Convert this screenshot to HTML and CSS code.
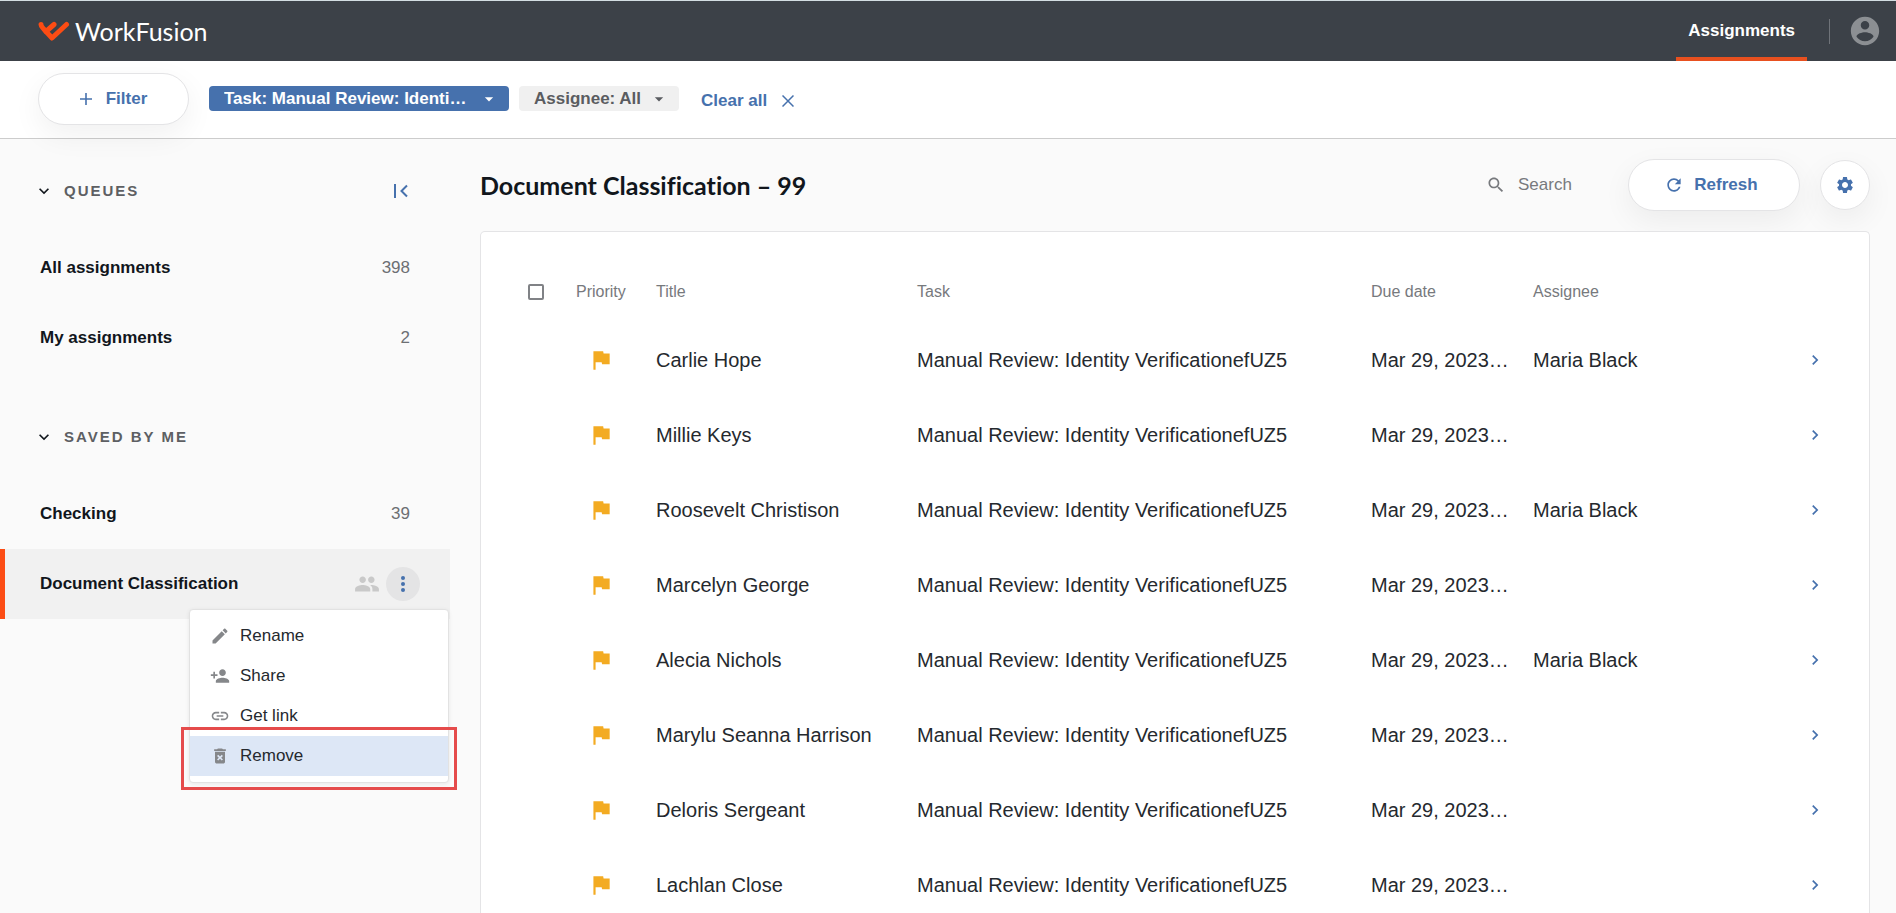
FILE: index.html
```html
<!DOCTYPE html>
<html lang="en">
<head>
    <meta charset="UTF-8">
    <meta name="viewport" content="width=device-width, initial-scale=1.0">
    <title>WorkFusion - Assignments</title>
    <link rel="stylesheet" href="styles.css">
</head>
<body>

<svg class="sprite" aria-hidden="true">
    <symbol id="flag" viewBox="0 0 24 24"><path d="M14.4 6L14 4H5v17h2v-7h5.600l.4 2h7V6z"/></symbol>
    <symbol id="chevron" viewBox="0 0 24 24"><path d="M10 6L8.590 7.410 13.170 12l-4.580 4.590L10 18l6-6z"/></symbol>
    <symbol id="expand" viewBox="0 0 24 24"><path d="M16.590 8.590L12 13.170 7.410 8.590 6 10l6 6 6-6z"/></symbol>
    <symbol id="caret" viewBox="0 0 24 24"><path d="M7 10l5 5 5-5z"/></symbol>
</svg>

<header class="topbar">
    <a class="logo" href="#">
        <svg width="32" height="20" viewBox="0 0 32 20" fill="none" stroke="#fc4c14" stroke-width="5" stroke-linecap="round" stroke-linejoin="round">
            <path d="M3 3.500c0 2 1.500 3 3 4.800L14 17 28.500 3.500"/>
            <path d="M8 10.500L16 3.500"/>
        </svg>
        <span>WorkFusion</span>
    </a>
    <nav class="topnav">
        <a class="active" href="#">Assignments</a>
    </nav>
    <button class="user" aria-label="Account">
        <svg width="34" height="34" viewBox="0 0 24 24"><path d="M12 2C6.480 2 2 6.480 2 12s4.480 10 10 10 10-4.480 10-10S17.520 2 12 2zm0 3c1.660 0 3 1.340 3 3s-1.340 3-3 3-3-1.340-3-3 1.340-3 3-3zm0 14.200c-2.500 0-4.710-1.280-6-3.220.03-1.990 4-3.080 6-3.080 1.990 0 5.970 1.090 6 3.080-1.290 1.940-3.500 3.220-6 3.220z"/></svg>
    </button>
</header>

<div class="filters">
    <button class="pill filter-btn">
        <svg width="12" height="12" viewBox="0 0 12 12" stroke="currentColor" stroke-width="1.600"><path d="M6 0v12M0 6h12"/></svg>
        Filter
    </button>
    <div class="chip chip-task">
        <select aria-label="Task filter"><option>Task: Manual Review: Identi…</option></select>
        <svg width="20" height="20"><use href="#caret"/></svg>
    </div>
    <div class="chip chip-assignee">
        <select aria-label="Assignee filter"><option>Assignee: All</option></select>
        <svg width="20" height="20"><use href="#caret"/></svg>
    </div>
    <button class="clear">
        Clear all
        <svg width="12" height="12" viewBox="0 0 12 12" stroke="currentColor" stroke-width="1.500"><path d="M.5.5l11 11M11.500.5l-11 11"/></svg>
    </button>
</div>

<div class="layout">
    <aside class="sidebar">
        <section>
            <div class="group-head">
                <button class="toggle"><svg width="20" height="20"><use href="#expand"/></svg>QUEUES</button>
                <button class="collapse" aria-label="Collapse sidebar">
                    <svg width="14" height="14" viewBox="0 0 14 14" fill="none" stroke="currentColor" stroke-width="2"><path d="M1 0v14M13 1.500L7.500 7l5.500 5.500"/></svg>
                </button>
            </div>
            <a class="queue" href="#">All assignments <span>398</span></a>
            <a class="queue" href="#">My assignments <span>2</span></a>
        </section>
        <section>
            <div class="group-head">
                <button class="toggle"><svg width="20" height="20"><use href="#expand"/></svg>SAVED BY ME</button>
            </div>
            <a class="queue" href="#">Checking <span>39</span></a>
            <div class="queue selected">
                <a href="#">Document Classification</a>
                <svg class="people" width="26" height="26" viewBox="0 0 24 24"><path d="M16 11c1.660 0 2.990-1.340 2.990-3S17.660 5 16 5c-1.660 0-3 1.340-3 3s1.340 3 3 3zm-8 0c1.660 0 2.990-1.340 2.990-3S9.660 5 8 5C6.340 5 5 6.340 5 8s1.340 3 3 3zm0 2c-2.330 0-7 1.170-7 3.500V19h14v-2.500c0-2.330-4.670-3.500-7-3.500zm8 0c-.29 0-.62.020-.97.050 1.160.84 1.970 1.970 1.970 3.450V19h6v-2.500c0-2.330-4.670-3.500-7-3.500z"/></svg>
                <button class="more" aria-label="More actions">
                    <svg width="24" height="24" viewBox="0 0 24 24"><circle cx="12" cy="6" r="2"/><circle cx="12" cy="12" r="2"/><circle cx="12" cy="18" r="2"/></svg>
                </button>
                <div class="menu" role="menu">
                    <button role="menuitem">
                        <svg width="20" height="20" viewBox="0 0 24 24"><path d="M3 17.250V21h3.750L17.810 9.940l-3.750-3.750L3 17.250zM20.710 7.040c.39-.39.39-1.020 0-1.410l-2.340-2.340c-.39-.39-1.020-.39-1.410 0l-1.830 1.830 3.750 3.750 1.830-1.830z"/></svg>
                        Rename
                    </button>
                    <button role="menuitem">
                        <svg width="20" height="20" viewBox="0 0 24 24"><path d="M15 12c2.210 0 4-1.790 4-4s-1.790-4-4-4-4 1.790-4 4 1.790 4 4 4zm-9-2V7H4v3H1v2h3v3h2v-3h3v-2H6zm9 4c-2.670 0-8 1.340-8 4v2h16v-2c0-2.660-5.330-4-8-4z"/></svg>
                        Share
                    </button>
                    <button role="menuitem">
                        <svg width="20" height="20" viewBox="0 0 24 24"><path d="M3.900 12c0-1.710 1.390-3.100 3.100-3.100h4V7H7c-2.760 0-5 2.240-5 5s2.240 5 5 5h4v-1.900H7c-1.710 0-3.100-1.390-3.100-3.100zM8 13h8v-2H8v2zm9-6h-4v1.900h4c1.710 0 3.100 1.390 3.100 3.100s-1.390 3.100-3.100 3.100h-4V17h4c2.760 0 5-2.240 5-5s-2.240-5-5-5z"/></svg>
                        Get link
                    </button>
                    <button class="remove" role="menuitem">
                        <svg width="20" height="20" viewBox="0 0 24 24"><path d="M6 19c0 1.100.9 2 2 2h8c1.100 0 2-.9 2-2V7H6v12zm2.460-7.120l1.410-1.410L12 12.590l2.120-2.120 1.410 1.410L13.410 14l2.120 2.120-1.410 1.410L12 15.410l-2.120 2.120-1.410-1.410L10.590 14l-2.130-2.120zM15.500 4l-1-1h-5l-1 1H5v2h14V4z"/></svg>
                        Remove
                    </button>
                </div>
            </div>
        </section>
    </aside>

    <main class="content">
        <div class="content-head">
            <h1>Document Classification – 99</h1>
            <label class="search">
                <svg width="20" height="20" viewBox="0 0 24 24"><path d="M15.500 14h-.79l-.28-.27C15.410 12.590 16 11.110 16 9.500 16 5.910 13.090 3 9.500 3S3 5.910 3 9.500 5.910 16 9.500 16c1.610 0 3.090-.59 4.230-1.570l.27.28v.79l5 4.990L20.490 19l-4.990-5zm-6 0C7.010 14 5 11.990 5 9.500S7.010 5 9.500 5 14 7.010 14 9.500 11.990 14 9.500 14z"/></svg>
                <input type="text" placeholder="Search">
            </label>
            <button class="pill refresh">
                <svg width="20" height="20" viewBox="0 0 24 24"><path d="M17.650 6.350C16.200 4.900 14.210 4 12 4c-4.420 0-7.990 3.580-7.990 8s3.570 8 7.990 8c3.730 0 6.840-2.550 7.730-6h-2.080c-.82 2.330-3.040 4-5.650 4-3.310 0-6-2.690-6-6s2.690-6 6-6c1.660 0 3.140.69 4.220 1.780L13 11h7V4l-2.350 2.350z"/></svg>
                Refresh
            </button>
            <button class="pill gear" aria-label="Settings">
                <svg width="20" height="20" viewBox="0 0 24 24"><path d="M19.140 12.940c.04-.3.060-.61.060-.94 0-.32-.02-.64-.07-.94l2.030-1.580c.18-.14.230-.41.120-.61l-1.920-3.320c-.12-.22-.37-.29-.59-.22l-2.390.96c-.5-.38-1.030-.7-1.620-.94l-.36-2.540c-.04-.24-.24-.41-.48-.41h-3.840c-.24 0-.43.170-.47.410l-.36 2.540c-.59.240-1.130.57-1.620.94l-2.390-.96c-.22-.08-.47 0-.59.220L2.740 8.870c-.12.210-.08.470.120.610l2.030 1.580c-.05.3-.09.630-.09.940s.02.640.070.940l-2.030 1.580c-.18.140-.23.410-.12.610l1.920 3.320c.12.220.37.290.59.220l2.390-.96c.5.380 1.030.7 1.620.94l.36 2.540c.05.240.24.410.48.410h3.840c.24 0 .44-.17.47-.41l.36-2.540c.59-.24 1.130-.56 1.620-.94l2.390.96c.22.080.47 0 .59-.22l1.920-3.320c.12-.22.070-.47-.12-.61l-2.010-1.580zM12 15.600c-1.980 0-3.600-1.620-3.600-3.600s1.620-3.600 3.600-3.600 3.600 1.620 3.600 3.600-1.620 3.600-3.600 3.600z"/></svg>
            </button>
        </div>

        <div class="card">
            <table>
                <colgroup>
                    <col class="col-check">
                    <col class="col-priority">
                    <col class="col-title">
                    <col class="col-task">
                    <col class="col-due">
                    <col>
                    <col class="col-open">
                </colgroup>
                <thead>
                    <tr>
                        <th class="check"><input type="checkbox" aria-label="Select all"></th>
                        <th>Priority</th>
                        <th>Title</th>
                        <th>Task</th>
                        <th>Due date</th>
                        <th>Assignee</th>
                        <th></th>
                    </tr>
                </thead>
                <tbody id="rows"></tbody>
            </table>
        </div>
    </main>
</div>

<script>
    const assignments = [
        ['Carlie Hope', 'Maria Black'],
        ['Millie Keys', ''],
        ['Roosevelt Christison', 'Maria Black'],
        ['Marcelyn George', ''],
        ['Alecia Nichols', 'Maria Black'],
        ['Marylu Seanna Harrison', ''],
        ['Deloris Sergeant', ''],
        ['Lachlan Close', '']
    ];

    document.getElementById('rows').innerHTML = assignments.map(([title, assignee]) => `
        <tr>
            <td></td>
            <td class="priority"><svg width="26" height="26"><use href="#flag"/></svg></td>
            <td>${title}</td>
            <td>Manual Review: Identity VerificationefUZ5</td>
            <td>Mar 29, 2023…</td>
            <td>${assignee}</td>
            <td class="open"><a href="#" aria-label="Open ${title}"><svg width="20" height="20"><use href="#chevron"/></svg></a></td>
        </tr>`).join('');
</script>

</body>
</html>
```
FILE: styles.css
```css
* {
    box-sizing: border-box;
    margin: 0;
    padding: 0;
}
body {
    font-family: 'Liberation Sans', Arial, sans-serif;
    font-size: 17px;
    line-height: 20px;
    height: 100vh;
    overflow: hidden;
    display: flex;
    flex-direction: column;
    background-color: #fafafa;
    color: #11161c;
}
a {
    color: inherit;
    text-decoration: none;
}
button, input, select {
    font: inherit;
    color: inherit;
    background: none;
    border: none;
}
button {
    cursor: pointer;
}
svg {
    fill: currentColor;
    flex-shrink: 0;
    display: block;
}
.sprite {
    position: absolute;
    width: 0;
    height: 0;
}

/* top bar */
.topbar {
    display: flex;
    align-items: center;
    height: 61px;
    flex-shrink: 0;
    padding: 0 14px 0 38px;
    background-color: #3c4148;
    border-top: 1px solid #d3dde2;
    color: #fff;
}
.logo {
    display: flex;
    align-items: center;
    gap: 5px;
    font-family: Lato, sans-serif;
    font-size: 25px;
}
.logo svg {
    fill: none;
}
.topnav {
    display: flex;
    align-self: stretch;
    margin-left: auto;
    margin-right: 22px;
}
.topnav a {
    display: flex;
    align-items: center;
    padding: 4px 12px 0;
    border-bottom: 4px solid transparent;
    font-weight: bold;
}
.topnav .active {
    border-bottom-color: #e8501f;
}
.user {
    border-left: 1px solid #6f7379;
    padding-left: 18px;
    height: 25px;
    display: flex;
    align-items: center;
    color: #8c8f93;
}

/* filter bar */
.filters {
    display: flex;
    align-items: center;
    height: 78px;
    flex-shrink: 0;
    padding: 0 38px 2px;
    background-color: #fff;
    border-bottom: 1px solid #ccc;
}
.pill {
    display: flex;
    align-items: center;
    justify-content: center;
    height: 52px;
    border: 1px solid #e4e4e6;
    border-radius: 26px;
    background-color: #fff;
    box-shadow: 0 10px 30px rgba(0, 0, 0, 0.06);
    color: #4671ad;
    font-weight: bold;
}
.filter-btn {
    width: 151px;
    gap: 14px;
    margin-right: 20px;
}
.chip {
    position: relative;
    height: 25px;
    margin-right: 10px;
    border-radius: 4px;
    font-weight: bold;
}
.chip select {
    appearance: none;
    width: 100%;
    height: 25px;
    padding: 0 30px 0 15px;
    cursor: pointer;
}
.chip svg {
    position: absolute;
    right: 10px;
    top: 3px;
    pointer-events: none;
}
.chip-task {
    width: 300px;
    background-color: #4671ad;
    color: #fff;
}
.chip-assignee {
    width: 160px;
    background-color: #f0f0f0;
    color: #5a5c60;
}
.clear {
    display: flex;
    align-items: center;
    gap: 15px;
    margin-left: 12px;
    padding-top: 4px;
    color: #4671ad;
    font-weight: bold;
}

/* sidebar */
.layout {
    flex: 1;
    min-height: 0;
    display: flex;
}
.sidebar {
    width: 450px;
    flex-shrink: 0;
    padding-top: 10px;
}
.sidebar section {
    margin-bottom: 22px;
}
.group-head {
    display: flex;
    align-items: center;
    justify-content: space-between;
    height: 84px;
    padding: 0 42px 0 34px;
}
.toggle {
    display: flex;
    align-items: center;
    gap: 10px;
    font-size: 15px;
    font-weight: bold;
    letter-spacing: 2px;
    color: #5d5f63;
}
.toggle svg {
    color: #11161c;
}
.collapse {
    color: #4671ad;
}
.collapse svg {
    fill: none;
}
.queue {
    position: relative;
    display: flex;
    align-items: center;
    justify-content: space-between;
    height: 70px;
    padding: 0 40px;
    font-weight: bold;
}
.queue span {
    font-weight: normal;
    color: #6c6f73;
}
.selected {
    background-color: #f1f1f1;
    border-left: 5px solid #fc4c14;
    padding: 0 30px 0 35px;
}
.people {
    margin-left: auto;
    margin-right: 6px;
    color: #c9c9c9;
}
.more {
    display: flex;
    align-items: center;
    justify-content: center;
    width: 34px;
    height: 34px;
    border-radius: 50%;
    background-color: #e4e4e5;
    color: #4671ad;
}
.menu {
    position: absolute;
    top: 60px;
    right: 1px;
    width: 260px;
    padding: 6px 0;
    background-color: #fff;
    border: 1px solid #e2e2e2;
    border-radius: 4px;
    box-shadow: 0 1px 4px rgba(0, 0, 0, 0.08);
}
.menu button {
    position: relative;
    display: flex;
    align-items: center;
    gap: 10px;
    width: 100%;
    height: 40px;
    padding: 0 20px;
    font-weight: normal;
    color: #25292e;
}
.menu svg {
    color: #85878a;
}
.menu .remove {
    background-color: #dde7f6;
}
.remove::after {
    content: '';
    position: absolute;
    inset: -9px -9px -14px;
    border: 3px solid #e54b4b;
}

/* content */
.content {
    flex: 1;
    min-width: 0;
    display: flex;
    flex-direction: column;
    padding: 0 26px 0 30px;
}
.content-head {
    display: flex;
    align-items: center;
    height: 92px;
    flex-shrink: 0;
}
h1 {
    font-family: Lato, sans-serif;
    font-size: 25px;
    line-height: 30px;
    font-variant-ligatures: none;
    margin-right: auto;
}
.search {
    display: flex;
    align-items: center;
    gap: 12px;
    color: #77797d;
}
.search input {
    width: 110px;
    outline: none;
}
.search input::placeholder {
    color: #77797d;
    opacity: 1;
}
.refresh {
    width: 172px;
    gap: 10px;
    padding-right: 6px;
    margin-right: 20px;
}
.gear {
    width: 50px;
    height: 50px;
}
.card {
    flex: 1;
    min-height: 0;
    overflow: hidden;
    padding-top: 30px;
    background-color: #fff;
    border: 1px solid #e4e4e6;
    border-bottom: none;
    border-radius: 5px 5px 0 0;
}
table {
    width: 100%;
    table-layout: fixed;
    border-collapse: collapse;
}
.col-check {
    width: 95px;
}
.col-priority {
    width: 80px;
}
.col-title {
    width: 261px;
}
.col-task {
    width: 454px;
}
.col-due {
    width: 162px;
}
.col-open {
    width: 84px;
}
th {
    height: 60px;
    text-align: left;
    font-size: 16px;
    font-weight: normal;
    color: #77797d;
}
.check {
    padding-left: 47px;
}
.check input {
    appearance: none;
    display: block;
    width: 16px;
    height: 16px;
    border: 2px solid #808286;
    border-radius: 2px;
}
td {
    height: 75px;
    font-size: 20px;
    white-space: nowrap;
    color: #25292e;
}
.priority svg {
    margin-left: 12px;
    color: #f3ab22;
}
.open svg {
    margin-left: 20px;
    color: #4671ad;
}
```
